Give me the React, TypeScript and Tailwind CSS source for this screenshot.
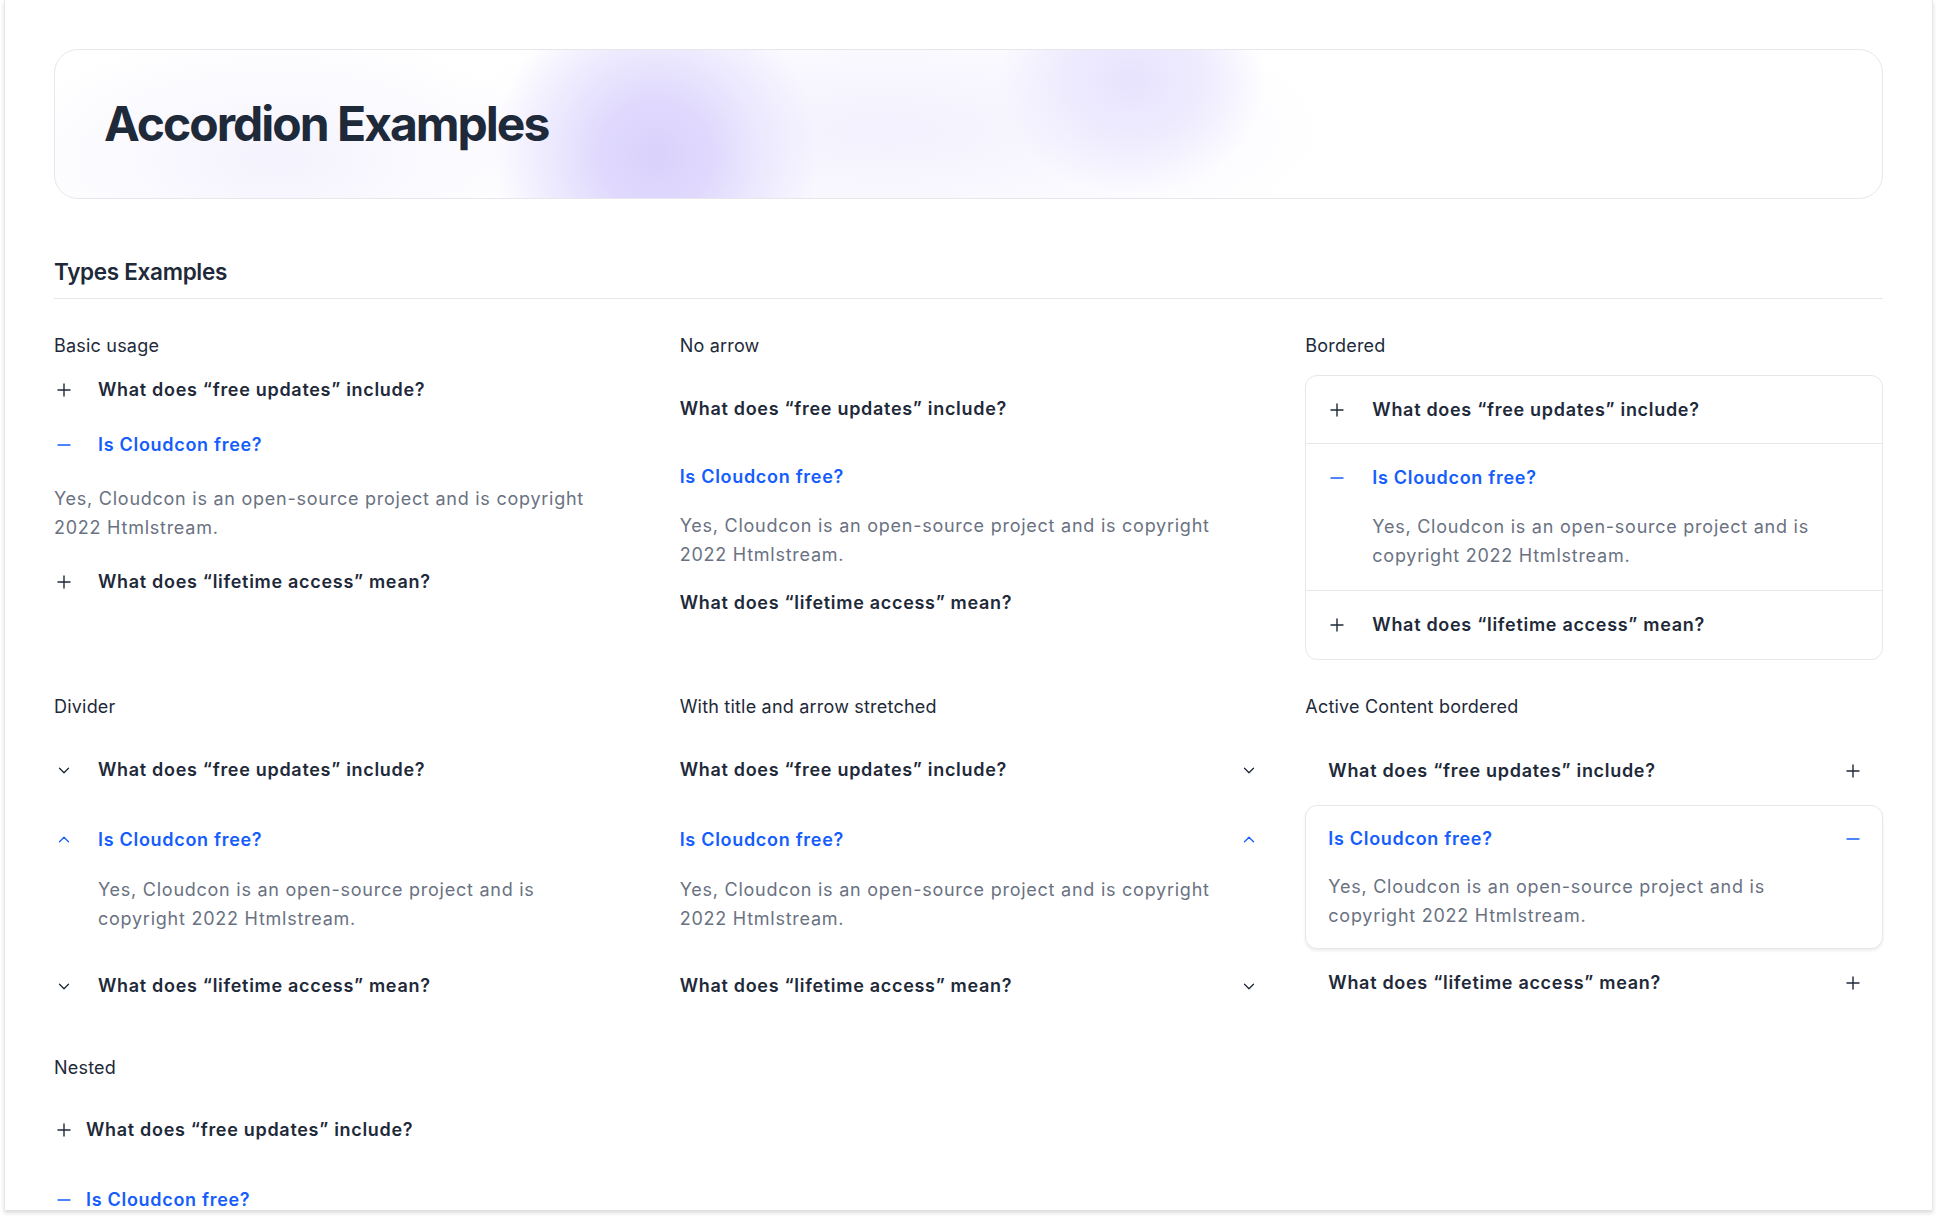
import React from "react";

type IconProps = { className?: string };

const PlusIcon = ({ className }: IconProps) => (
  <svg width="14" height="14" viewBox="0 0 14 14" fill="none" stroke="currentColor" strokeWidth="1.4" strokeLinecap="round" className={className}>
    <path d="M1 7h12M7 1v12" />
  </svg>
);

const MinusIcon = ({ className }: IconProps) => (
  <svg width="14" height="14" viewBox="0 0 14 14" fill="none" stroke="currentColor" strokeWidth="1.4" strokeLinecap="round" className={className}>
    <path d="M1 7h12" />
  </svg>
);

const ChevronDown = ({ className }: IconProps) => (
  <svg width="12" height="12" viewBox="0 0 12 12" fill="none" stroke="currentColor" strokeWidth="1.3" strokeLinecap="round" strokeLinejoin="round" className={className}>
    <path d="M1.5 4.25l4.5 4.5 4.5-4.5" />
  </svg>
);

const ChevronUp = ({ className }: IconProps) => (
  <svg width="12" height="12" viewBox="0 0 12 12" fill="none" stroke="currentColor" strokeWidth="1.3" strokeLinecap="round" strokeLinejoin="round" className={className}>
    <path d="M1.5 7.75l4.5-4.5 4.5 4.5" />
  </svg>
);

const Q1 = "What does \u201Cfree updates\u201D include?";
const Q2 = "Is Cloudcon free?";
const Q3 = "What does \u201Clifetime access\u201D mean?";
const BODY = "Yes, Cloudcon is an open-source project and is copyright 2022 Htmlstream.";

const Label = ({ children }: { children: React.ReactNode }) => (
  <div className="text-lg leading-7 tracking-[0.2px] text-gray-800">{children}</div>
);

const qDark = "text-lg font-semibold tracking-[0.7px] text-gray-800";
const qBlue = "text-lg font-semibold tracking-[0.7px] text-blue-600";
const bodyText = "text-lg leading-[29px] tracking-[0.75px] text-gray-500";

function BasicUsage() {
  return (
    <div>
      <Label>Basic usage</Label>
      <div className="mt-[2px]">
        <div className={`flex h-[55px] items-center ${qDark}`}>
          <span className="flex w-[44px] shrink-0"><PlusIcon className="ml-[3px] text-gray-800" /></span>
          {Q1}
        </div>
        <div className={`flex h-[55px] items-center ${qBlue}`}>
          <span className="flex w-[44px] shrink-0"><MinusIcon className="ml-[3px] text-blue-600" /></span>
          {Q2}
        </div>
        <p className={`py-3 pr-[20px] ${bodyText}`}>{BODY}</p>
        <div className={`flex h-[55px] items-center ${qDark}`}>
          <span className="flex w-[44px] shrink-0"><PlusIcon className="ml-[3px] text-gray-800" /></span>
          {Q3}
        </div>
      </div>
    </div>
  );
}

function NoArrow() {
  return (
    <div>
      <Label>No arrow</Label>
      <div className="mt-[15px]">
        <div className={`flex h-[68px] items-center ${qDark}`}>{Q1}</div>
        <div className={`flex h-[68px] items-center ${qBlue}`}>{Q2}</div>
        <p className={`pr-[20px] ${bodyText}`}>{BODY}</p>
        <div className={`flex h-[68px] items-center ${qDark}`}>{Q3}</div>
      </div>
    </div>
  );
}

function Bordered() {
  return (
    <div>
      <Label>Bordered</Label>
      <div className="mt-[15px] divide-y divide-gray-200 rounded-xl border border-gray-200">
        <div className={`flex h-[68px] items-center px-[24px] ${qDark}`}>
          <span className="flex w-[42px] shrink-0"><PlusIcon className="text-gray-800" /></span>
          {Q1}
        </div>
        <div>
          <div className={`flex h-[68px] items-center px-[24px] ${qBlue}`}>
            <span className="flex w-[42px] shrink-0"><MinusIcon className="text-blue-600" /></span>
            {Q2}
          </div>
          <p className={`pb-5 pl-[66px] pr-[24px] ${bodyText}`}>{BODY}</p>
        </div>
        <div className={`flex h-[68px] items-center px-[24px] ${qDark}`}>
          <span className="flex w-[42px] shrink-0"><PlusIcon className="text-gray-800" /></span>
          {Q3}
        </div>
      </div>
    </div>
  );
}

function Divider() {
  return (
    <div>
      <Label>Divider</Label>
      <div className="mt-[14px]">
        <div className={`flex h-[70px] items-center ${qDark}`}>
          <span className="flex w-[44px] shrink-0"><ChevronDown className="ml-[4px] text-gray-800" /></span>
          {Q1}
        </div>
        <div>
          <div className={`flex h-[70px] items-center ${qBlue}`}>
            <span className="flex w-[44px] shrink-0"><ChevronUp className="ml-[4px] text-blue-600" /></span>
            {Q2}
          </div>
          <p className={`pb-[18px] pl-[44px] pr-[24px] ${bodyText}`}>{BODY}</p>
        </div>
        <div className={`flex h-[70px] items-center ${qDark}`}>
          <span className="flex w-[44px] shrink-0"><ChevronDown className="ml-[4px] text-gray-800" /></span>
          {Q3}
        </div>
      </div>
    </div>
  );
}

function Stretched() {
  return (
    <div>
      <Label>With title and arrow stretched</Label>
      <div className="mt-[14px]">
        <div className={`flex h-[70px] items-center justify-between ${qDark}`}>
          {Q1}
          <ChevronDown className="mr-[2px] text-gray-800" />
        </div>
        <div>
          <div className={`flex h-[70px] items-center justify-between ${qBlue}`}>
            {Q2}
            <ChevronUp className="mr-[2px] text-blue-600" />
          </div>
          <p className={`pb-[18px] pr-[20px] ${bodyText}`}>{BODY}</p>
        </div>
        <div className={`flex h-[70px] items-center justify-between ${qDark}`}>
          {Q3}
          <ChevronDown className="mr-[2px] text-gray-800" />
        </div>
      </div>
    </div>
  );
}

function ActiveBordered() {
  return (
    <div>
      <Label>Active Content bordered</Label>
      <div className="mt-[16px] flex flex-col">
        <div className="rounded-xl border border-transparent">
          <div className={`flex h-[66px] items-center justify-between px-[22px] ${qDark}`}>
            {Q1}
            <PlusIcon className="text-gray-800" />
          </div>
        </div>
        <div className="rounded-xl border border-gray-200 bg-white shadow-[0_2px_3px_rgba(0,0,0,0.07)]">
          <div className={`flex h-[66px] items-center justify-between px-[22px] ${qBlue}`}>
            {Q2}
            <MinusIcon className="text-blue-600" />
          </div>
          <p className={`pb-[18px] pl-[22px] pr-[52px] ${bodyText}`}>{BODY}</p>
        </div>
        <div className="rounded-xl border border-transparent">
          <div className={`flex h-[66px] items-center justify-between px-[22px] ${qDark}`}>
            {Q3}
            <PlusIcon className="text-gray-800" />
          </div>
        </div>
      </div>
    </div>
  );
}

function Nested() {
  return (
    <div>
      <Label>Nested</Label>
      <div className="mt-[13px]">
        <div className={`flex h-[70px] items-center ${qDark}`}>
          <span className="flex w-[32px] shrink-0"><PlusIcon className="ml-[3px] text-gray-800" /></span>
          {Q1}
        </div>
        <div className={`flex h-[70px] items-center ${qBlue}`}>
          <span className="flex w-[32px] shrink-0"><MinusIcon className="ml-[3px] text-blue-600" /></span>
          {Q2}
        </div>
      </div>
    </div>
  );
}

function Header() {
  return (
    <div className="relative flex h-[150px] items-center overflow-hidden rounded-3xl border border-gray-200 bg-white px-[49px]">
      <div className="pointer-events-none absolute left-[-60px] top-[-20px] h-[260px] w-[560px] rounded-full bg-[radial-gradient(ellipse_at_center,#f4f3fe_0%,rgba(246,245,255,0)_70%)]" />
      <div className="pointer-events-none absolute left-[380px] top-[-60px] h-[280px] w-[900px] rounded-full bg-[radial-gradient(ellipse_at_center,#f3f1fe_0%,rgba(244,242,255,0)_70%)]" />
      <div className="pointer-events-none absolute left-[436px] top-[-60px] h-[330px] w-[330px] rounded-full bg-[radial-gradient(circle_at_center,#dad1fc_0%,#e0d9fd_24%,#ece8fe_44%,rgba(242,239,255,0)_70%)]" />
      <div className="pointer-events-none absolute left-[942px] top-[-85px] h-[230px] w-[270px] rounded-full bg-[radial-gradient(ellipse_at_center,#e8e3fe_0%,#efecfe_38%,rgba(243,241,255,0)_70%)]" />
      <h1 className="relative text-5xl font-bold tracking-[-2px] text-gray-800">Accordion Examples</h1>
    </div>
  );
}

export default function App() {
  return (
    <div className="min-h-[1220px] bg-white font-['Inter','Noto_Sans',sans-serif]">
      <div className="ml-[4px] h-[1210px] w-[1929px] overflow-hidden border-x border-gray-200 bg-white px-[49px] pt-[49px] shadow-[0_3px_4px_rgba(0,0,0,0.14)]">
        <Header />
        <h2 className="mt-[57px] border-b border-gray-200 pb-[10px] text-[22.5px] leading-8 font-semibold tracking-[-0.3px] text-gray-800">Types Examples</h2>
        <div className="mt-[33px] grid grid-cols-3 items-start gap-x-12 gap-y-[33px]">
          <BasicUsage />
          <NoArrow />
          <Bordered />
          <Divider />
          <Stretched />
          <ActiveBordered />
          <Nested />
        </div>
      </div>
    </div>
  );
}
